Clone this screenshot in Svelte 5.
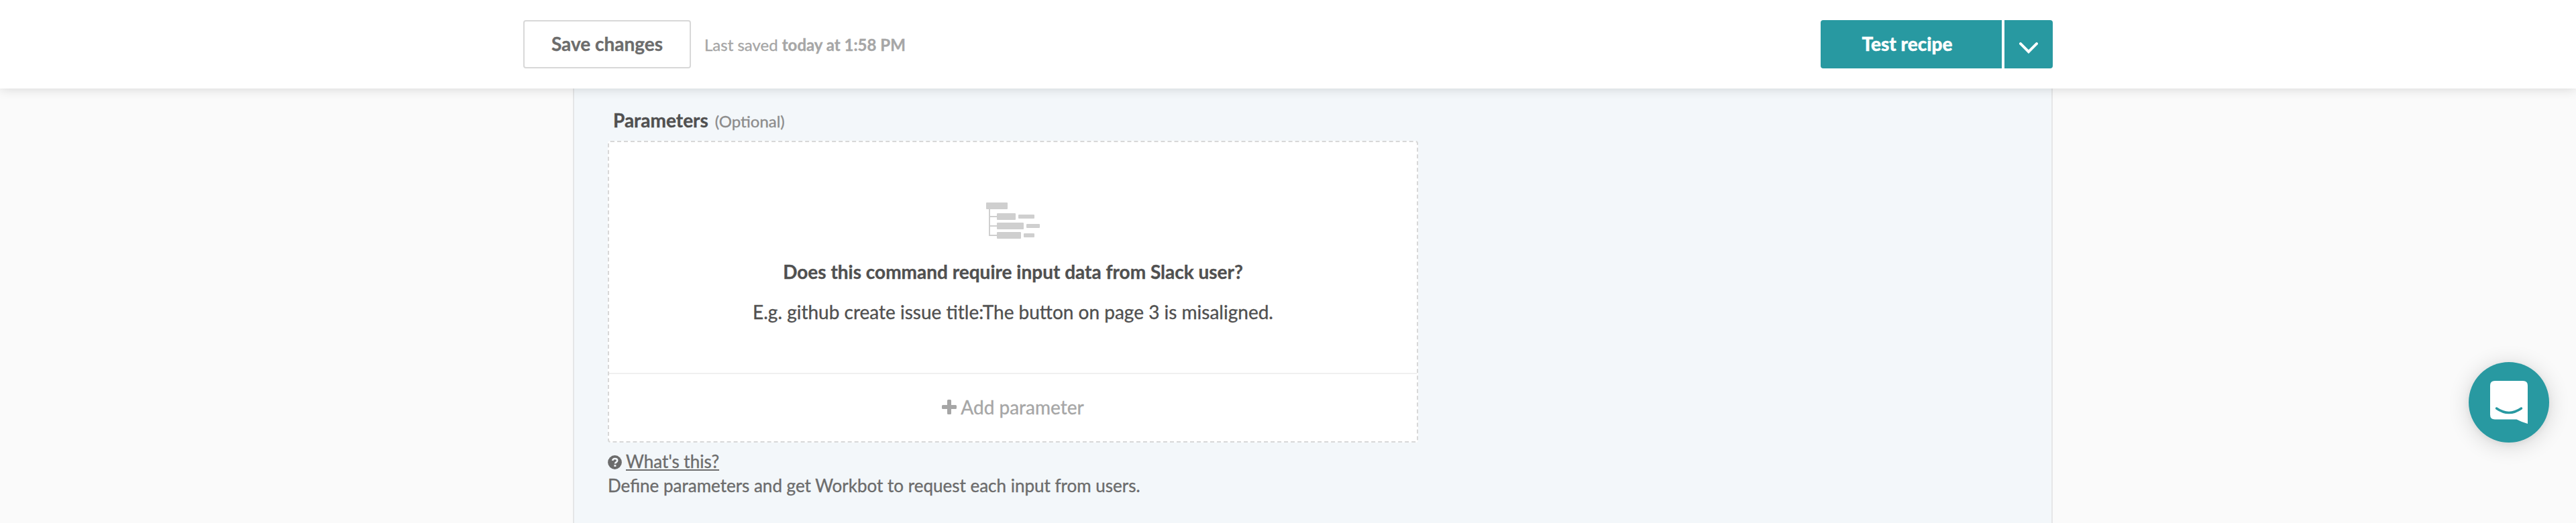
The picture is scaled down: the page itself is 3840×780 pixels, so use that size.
<script>
  const saved = 'today at 1:58 PM';
</script>

<div class="page">
  <header class="bar">
    <button class="save">Save changes</button>
    <p class="status">Last saved <b>{saved}</b></p>
    <div class="actions">
      <button class="test">Test recipe</button>
      <button class="more" aria-label="More">
        <svg width="28" height="18" viewBox="0 0 28 18"><path d="M2 3.200 14 15.200 26 3.200" fill="none" stroke="#fff" stroke-width="4" stroke-linecap="round" /></svg>
      </button>
    </div>
  </header>

  <main class="panel">
    <div class="label"><b>Parameters</b><span>(Optional)</span></div>
    <section class="box">
      <div class="intro">
        <svg class="tree" width="80" height="54" viewBox="0 0 80 54" fill="#cfcfcf">
          <rect width="32" height="10" rx="1" />
          <path d="M4 10h2v10h10v2H6v12h10v2H6v12h10v2H4z" />
          <rect x="16" y="16" width="28" height="10" rx="1" />
          <rect x="48" y="18" width="24" height="6" rx="1" />
          <rect x="16" y="30" width="40" height="10" rx="1" />
          <rect x="60" y="32" width="20" height="6" rx="1" />
          <rect x="16" y="44" width="36" height="10" rx="1" />
          <rect x="56" y="46" width="16" height="6" rx="1" />
        </svg>
        <h2>Does this command require input data from Slack user?</h2>
        <p>E.g. github create issue title:The button on page 3 is misaligned.</p>
      </div>
      <button class="add">
        <svg width="22" height="22" viewBox="0 0 22 22"><path d="M9.500 0h3q1.500 0 1.500 1.500V8h6.500q1.500 0 1.500 1.500v3q0 1.500-1.500 1.500H14v6.500q0 1.500-1.500 1.500h-3Q8 22 8 20.500V14H1.500Q0 14 0 12.500v-3Q0 8 1.500 8H8V1.500Q8 0 9.500 0z" fill="#a6a6a6" /></svg>
        <span>Add parameter</span>
      </button>
    </section>
    <div class="help">
      <svg width="21" height="21" viewBox="0 0 21 21"><circle cx="10.500" cy="10.500" r="10.400" fill="#6c6c6c" /><path d="M7 7.900C7.600 5.800 9 5 10.700 5c2 0 3.500 1.200 3.500 2.900 0 2.500-3.200 2.300-3.200 4.600" fill="none" stroke="#f3f7fa" stroke-width="2.600" /><rect x="9.400" y="14.200" width="3" height="2.700" fill="#f3f7fa" /></svg>
      <a href="#help">What's this?</a>
    </div>
    <p class="desc">Define parameters and get Workbot to request each input from users.</p>
  </main>

  <button class="chat" aria-label="Chat">
    <svg width="56" height="64" viewBox="0 0 56 64"><path d="M7 0h42q7 0 7 7v57q-9-2.500-16.500-6.500H7q-7 0-7-7V7q0-7 7-7z" fill="#fff" /><path d="M9.500 41q18.500 13 37 0" fill="none" stroke="#2899a1" stroke-width="3.400" stroke-linecap="round" /></svg>
  </button>
</div>

<style>
  :global(body) { background: #fafafa; }
  .page { height: 780px; overflow: hidden; display: flex; flex-direction: column; font-family: Lato, sans-serif; font-size: 28px; color: #505050; -webkit-text-stroke: .35px; }
  button { border: 0; padding: 0; font: inherit; color: inherit; background: none; }
  p, h2 { margin: 0; }
  .bar { flex: none; box-sizing: border-box; height: 132px; padding: 0 780px; display: flex; align-items: center; background: #fff; box-shadow: 0 0 16px rgba(0, 0, 0, .16); z-index: 1; }
  .save { box-sizing: border-box; width: 250px; height: 72px; border: 2px solid #d8d8d8; border-radius: 4px; font-weight: 700; color: #6c6c6c; padding-bottom: 2px; }
  .status { margin-left: 20px; padding-top: 1px; font-size: 24px; color: #a6a6a6; }
  .actions { margin-left: auto; display: flex; gap: 4px; }
  .actions button { height: 72px; background: #2899a1; color: #fff; font-weight: 900; }
  .actions .test { width: 270px; border-radius: 4px 0 0 4px; padding: 0 12px 2px 0; }
  .actions .more { width: 72px; border-radius: 0 4px 4px 0; padding-top: 10px; }
  .more svg { display: block; margin: 0 auto; }
  .panel { box-sizing: border-box; flex: 1; width: 2206px; margin-left: 854px; padding: 30px 50px 0; background: #f3f7fa; border: solid #e5e6e7; border-width: 0 2px; }
  .label { display: flex; align-items: baseline; gap: 10px; height: 48px; padding-left: 8px; line-height: 34px; }
  .label span { font-size: 24px; color: #8c8c8c; }
  .box { box-sizing: border-box; width: 1208px; height: 450px; border: 2px dashed #d8d8d8; border-radius: 4px; background: #fff; display: flex; flex-direction: column; }
  .intro { height: 344px; padding-top: 90px; box-sizing: border-box; display: flex; flex-direction: column; align-items: center; white-space: nowrap; }
  h2 { font-size: 28px; line-height: 40px; margin-top: 29px; }
  .intro p { line-height: 40px; margin-top: 20px; }
  .add { flex: 1; border-top: 2px solid #f0f0f0; display: flex; align-items: center; justify-content: center; gap: 6px; color: #a6a6a6; padding-bottom: 2px; }
  .help { display: flex; align-items: center; gap: 6px; margin-top: 10px; height: 36px; font-size: 26px; line-height: 36px; color: #6c6c6c; }
  .help svg { margin-top: 3px; }
  .help a { color: inherit; text-decoration: underline; }
  .desc { font-size: 26px; line-height: 36px; color: #6c6c6c; }
  .chat { position: fixed; right: 40px; bottom: 120px; width: 120px; height: 120px; border-radius: 50%; background: #2899a1; box-shadow: 0 4px 32px rgba(0, 0, 0, .16), 0 2px 12px rgba(0, 0, 0, .06); display: flex; justify-content: center; align-items: center; }
</style>
